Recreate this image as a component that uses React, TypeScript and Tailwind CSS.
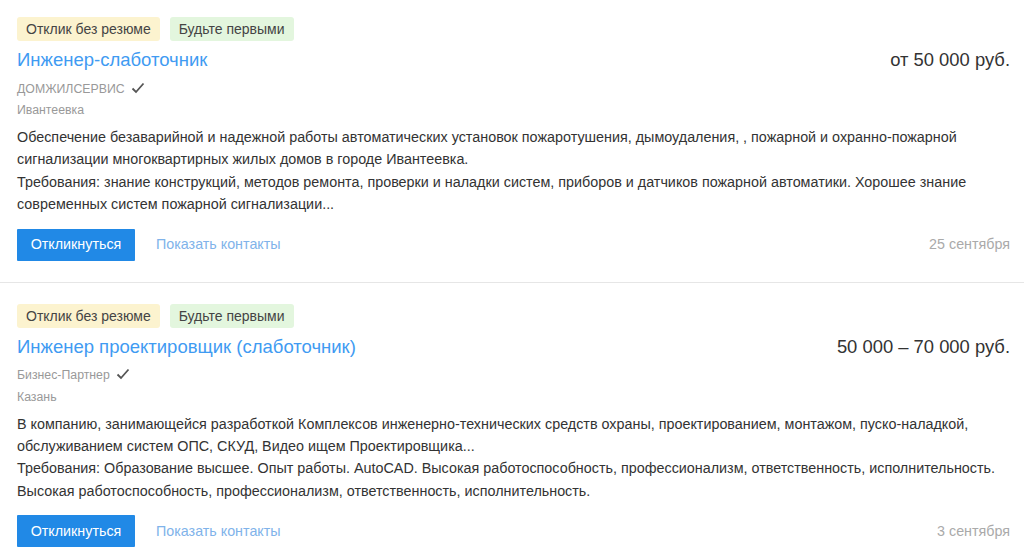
import React from 'react';

type Vacancy = {
  title: string;
  salary: string;
  company: string;
  city: string;
  text: string[];
  date: string;
};

const vacancies: Vacancy[] = [
  {
    title: 'Инженер-слаботочник',
    salary: 'от 50 000 руб.',
    company: 'ДОМЖИЛСЕРВИС',
    city: 'Ивантеевка',
    text: [
      'Обеспечение безаварийной и надежной работы автоматических установок пожаротушения, дымоудаления, , пожарной и охранно-пожарной сигнализации многоквартирных жилых домов в городе Ивантеевка.',
      'Требования: знание конструкций, методов ремонта, проверки и наладки систем, приборов и датчиков пожарной автоматики. Хорошее знание современных систем пожарной сигнализации...',
    ],
    date: '25 сентября',
  },
  {
    title: 'Инженер проектировщик (слаботочник)',
    salary: '50 000 – 70 000 руб.',
    company: 'Бизнес-Партнер',
    city: 'Казань',
    text: [
      'В компанию, занимающейся разработкой Комплексов инженерно-технических средств охраны, проектированием, монтажом, пуско-наладкой, обслуживанием систем ОПС, СКУД, Видео ищем Проектировщика...',
      'Требования: Образование высшее. Опыт работы. AutoCAD. Высокая работоспособность, профессионализм, ответственность, исполнительность. Высокая работоспособность, профессионализм, ответственность, исполнительность.',
    ],
    date: '3 сентября',
  },
];

const Check = () => (
  <svg width="14" height="12" viewBox="0 0 14 12" fill="none" className="ml-[6px] mt-[-3px]">
    <path d="M1.5 6.5 L5 10 L12.5 1.5" stroke="#555" strokeWidth="1.8" />
  </svg>
);

const Card: React.FC<{ v: Vacancy }> = ({ v }) => (
  <div className="px-[17px] pt-[21px] pb-[21px] first:pt-[17px] border-b border-[#e6e6e6]">
    <div className="flex gap-[10px] text-[14px] text-[#444]">
      <span className="bg-[#fcf3cf] rounded-[3px] h-[24px] px-[9px] leading-[24px]">Отклик без резюме</span>
      <span className="bg-[#e3f6de] rounded-[3px] h-[24px] px-[9px] leading-[24px]">Будьте первыми</span>
    </div>
    <div className="flex justify-between items-center mt-[6px] h-[26px]">
      <a className="text-[18.5px] text-[#3f9bf2]">{v.title}</a>
      <span className="text-[18.4px] text-[#333] mr-[-3px]">{v.salary}</span>
    </div>
    <div className="flex items-center mt-[7px] h-[18px] text-[12.3px] text-[#999]">
      {v.company}
      <Check />
    </div>
    <div className="text-[12.3px] text-[#999] h-[18px] leading-[18px] mt-[3px]">{v.city}</div>
    <div className="mt-[7px] text-[14.35px] leading-[22.4px] text-[#333]">
      {v.text.map((t, i) => (
        <p key={i}>{t}</p>
      ))}
    </div>
    <div className="flex items-center mt-[13px]">
      <button className="bg-[#2189e6] text-white text-[14.3px] h-[32px] w-[118px] rounded-[1px]">Откликнуться</button>
      <a className="ml-[21px] text-[14.3px] text-[#80b3ea]">Показать контакты</a>
      <span className="ml-auto text-[14.3px] text-[#aaa] mr-[-3px]">{v.date}</span>
    </div>
  </div>
);

export default function App() {
  return (
    <div className="bg-white w-[1024px] h-[559px] overflow-hidden font-['Liberation_Sans',Arial,sans-serif]">
      {vacancies.map((v, i) => (
        <Card key={i} v={v} />
      ))}
    </div>
  );
}
